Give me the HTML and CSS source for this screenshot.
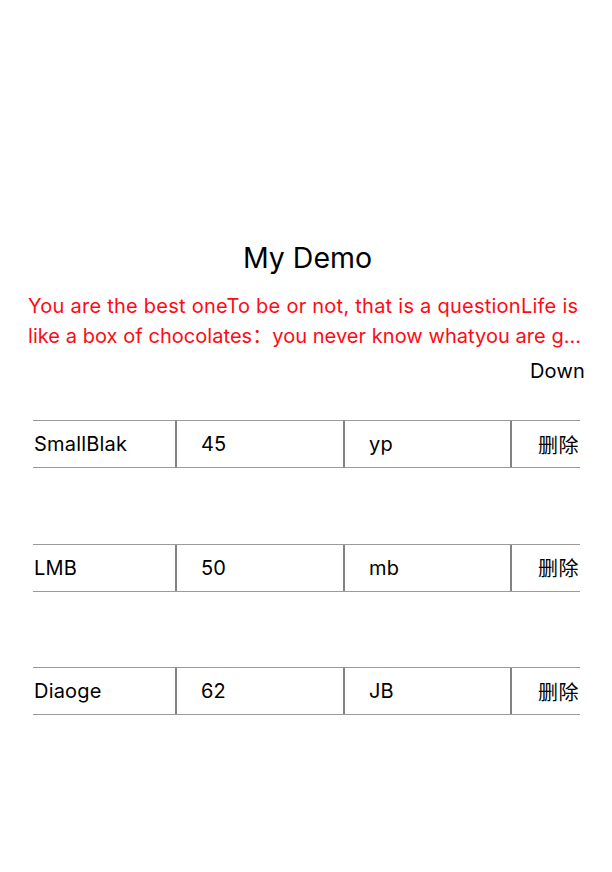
FILE: index.html
```html
<!DOCTYPE html>
<html>
<head>
<meta charset="utf-8">
<link rel="stylesheet" href="styles.css">
</head>
<body>
<div class="page">
  <h1 class="title">My Demo</h1>
  <p class="quote">
    <span class="qline">You are the best oneTo be or not, that is a questionLife is</span>
    <span class="qline clip">like a box of chocolates：you never know whatyou are gonna get</span>
  </p>
  <div class="down">Down</div>
  <div class="rows">
    <div class="row">
      <div class="cell c1">SmallBlak</div>
      <div class="cell c2">45</div>
      <div class="cell c3">yp</div>
      <div class="cell c4">删除</div>
    </div>
    <div class="row">
      <div class="cell c1">LMB</div>
      <div class="cell c2">50</div>
      <div class="cell c3">mb</div>
      <div class="cell c4">删除</div>
    </div>
    <div class="row">
      <div class="cell c1">Diaoge</div>
      <div class="cell c2">62</div>
      <div class="cell c3">JB</div>
      <div class="cell c4">删除</div>
    </div>
  </div>
</div>
</body>
</html>
```
FILE: styles.css
```css
html, body {
  margin: 0;
  padding: 0;
  background: #fff;
}
body {
  font-family: Inter, "Noto Sans CJK SC", sans-serif;
  color: #000;
}
.page {
  padding: 241px 27px 0 28px;
  display: flex;
  flex-direction: column;
}
.title {
  margin: 0;
  font-size: 28.5px;
  font-weight: 400;
  line-height: 34px;
  text-align: center;
  padding-left: 2px;
}
.quote {
  margin: 16px 0 0;
  color: #ff0a14;
  font-size: 20px;
  letter-spacing: 0.25px;
  line-height: 30px;
  display: flex;
  flex-direction: column;
}
.qline {
  display: block;
  white-space: nowrap;
  overflow: hidden;
}
.clip {
  text-overflow: ellipsis;
  letter-spacing: 0.05px;
}
.down {
  margin-top: 5px;
  font-size: 20px;
  letter-spacing: 0.2px;
  line-height: 30px;
  text-align: right;
}
.rows {
  margin-top: 34px;
  display: flex;
  flex-direction: column;
  gap: 75.5px;
  padding: 0 5px 0 5px;
}
.row {
  display: grid;
  grid-template-columns: 142px 168px 167px 1fr;
  height: 46px;
  border-top: 1px solid #9a9a9a;
  border-bottom: 1px solid #9a9a9a;
}
.cell {
  display: flex;
  align-items: center;
  font-size: 20px;
  letter-spacing: 0.2px;
  white-space: nowrap;
}
.c1 {
  padding-left: 1px;
}
.c2, .c3, .c4 {
  border-left: 2px solid #828282;
}
.c2 { padding-left: 24px; }
.c3 { padding-left: 24px; }
.c4 { justify-content: flex-end; padding-right: 1px; letter-spacing: 0.5px; }
```
